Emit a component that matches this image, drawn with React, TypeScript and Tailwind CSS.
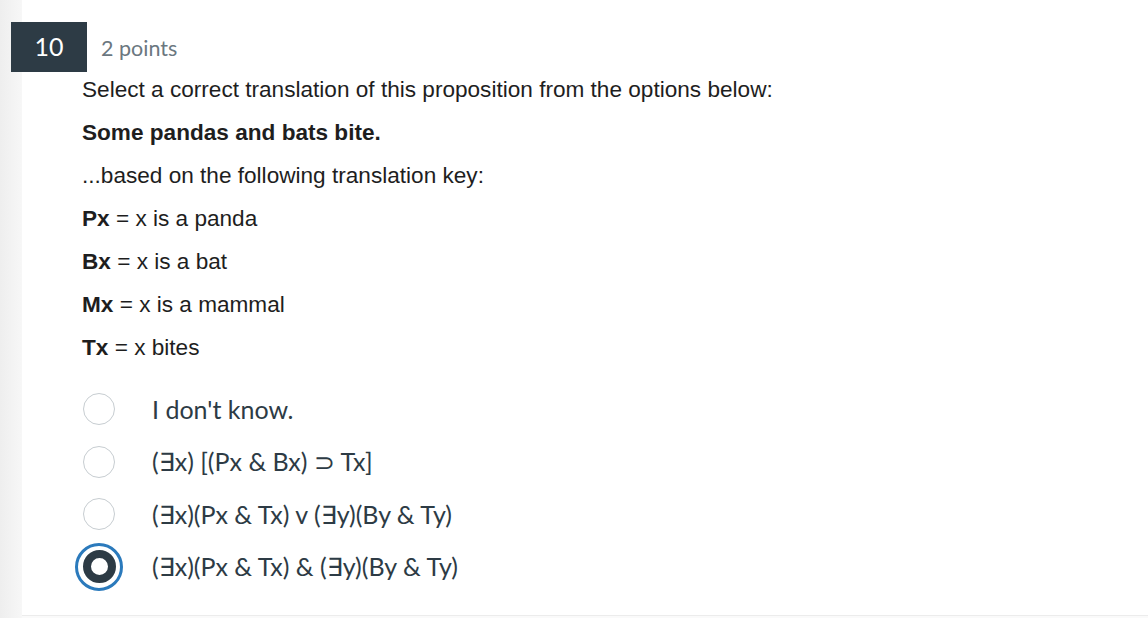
import React, { useState } from "react";

const keyRows = [
  { term: "Px", meaning: "x is a panda" },
  { term: "Bx", meaning: "x is a bat" },
  { term: "Mx", meaning: "x is a mammal" },
  { term: "Tx", meaning: "x bites" },
];

const answers = [
  "I don't know.",
  "(\u2203x) [(Px & Bx) \u2283 Tx]",
  "(\u2203x)(Px & Tx) v (\u2203y)(By & Ty)",
  "(\u2203x)(Px & Tx) & (\u2203y)(By & Ty)",
];

const Radio = ({ checked }: { checked: boolean }) => {
  if (checked) {
    return (
      <div className="w-[48px] h-[48px] rounded-full border-[3px] border-[#2b7abc] flex items-center justify-center">
        <div className="w-[33px] h-[33px] rounded-full border-[8px] border-[#2d3b45] bg-white"></div>
      </div>
    );
  }
  return <div className="w-[32px] h-[32px] rounded-full border-[1.5px] border-[#c7cdd1] bg-white"></div>;
};

const App = () => {
  const [selected, setSelected] = useState(3);

  return (
    <div className="flex min-h-[618px] bg-[#fafafa]">
      <div className="w-[22px] shrink-0 bg-gradient-to-r from-[#eeeeee] to-[#f7f7f7]"></div>
      <div className="flex-1 flex flex-col">
        <div className="bg-white border-b border-[#ececec] pb-[22px]">
          <div className="flex items-center pt-[22px] -ml-[11px]">
            <div className="w-[76px] h-[50px] bg-[#2d3b45] flex items-center justify-center text-white text-[25px] font-['Lato',sans-serif]">
              10
            </div>
            <div className="ml-[14px] mt-[2px] text-[21.5px] text-[#6b7780] font-['Lato',sans-serif]">2 points</div>
          </div>

          <div className="pl-[60px] mt-[6px] flex flex-col gap-[19px] text-[22.6px] leading-[24px] text-[#1e1e1e] font-['Liberation_Sans','Helvetica',sans-serif]">
            <p>Select a correct translation of this proposition from the options below:</p>
            <p className="font-bold">Some pandas and bats bite.</p>
            <p>...based on the following translation key:</p>
            {keyRows.map((row) => (
              <p key={row.term}>
                <span className="font-bold">{row.term}</span> = {row.meaning}
              </p>
            ))}
          </div>

          <div className="mt-[23px] flex flex-col">
            {answers.map((answer, index) => (
              <div
                key={index}
                className="flex items-center h-[52.5px] cursor-pointer"
                onClick={() => setSelected(index)}
              >
                <div className="ml-[53px] w-[48px] flex items-center justify-center">
                  <Radio checked={selected === index} />
                </div>
                <div className="ml-[29px] text-[25px] text-[#2d3b45] font-['Lato',sans-serif]">{answer}</div>
              </div>
            ))}
          </div>
        </div>
      </div>
    </div>
  );
};

export default App;
